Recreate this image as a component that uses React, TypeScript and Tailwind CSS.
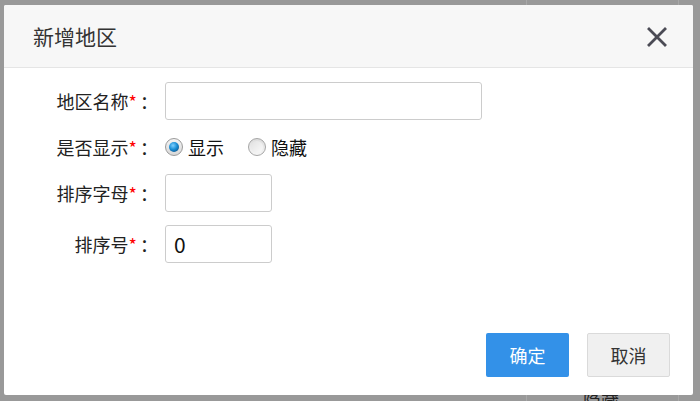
const font = "font-['Noto_Sans_CJK_SC','Noto_Sans',sans-serif]";

function Label({ text }: { text: string }) {
    return (
        <div className="w-[154px] shrink-0 text-right text-[18px] leading-none text-[#222]">
            {text}
            <span className="text-[#f00]">*</span>
            <span className="ml-[3px]">：</span>
        </div>
    );
}

function Radio({ checked, label }: { checked?: boolean; label: string }) {
    return (
        <label className="flex items-center gap-[5px]">
            <span
                className={
                    checked
                        ? "flex h-[18px] w-[18px] items-center justify-center rounded-full border border-[#9a9a9a] bg-gradient-to-b from-[#f4f4f4] to-[#d8d8d8]"
                        : "flex h-[18px] w-[18px] items-center justify-center rounded-full border border-[#a5a5a5] bg-gradient-to-b from-[#dcdcdc] to-[#f6f6f6]"
                }
            >
                {checked ? (
                    <span className="h-[10px] w-[10px] rounded-full bg-[radial-gradient(circle_at_40%_35%,#7fd0ff_0%,#1a8fd6_45%,#0a3f6e_100%)]" />
                ) : (
                    <span className="h-[12px] w-[12px] rounded-full bg-gradient-to-br from-[#e2e2e2] to-[#fafafa]" />
                )}
            </span>
            <span className="text-[18px] leading-none text-[#111]">{label}</span>
        </label>
    );
}

export default function App() {
    return (
        <div className={`relative h-[401px] w-[700px] overflow-hidden bg-[#999] ${font}`}>
            {/* page behind the overlay */}
            <div className="absolute left-[526px] top-0 h-full w-px bg-[#a8a8a8]" />
            <div className="absolute left-[678px] top-0 h-full w-px bg-[#a8a8a8]" />
            <div className="absolute left-[583px] top-[392px] text-[18px] leading-none text-[#222]">隐藏</div>

            <div className="absolute left-[4px] top-[5px] flex h-[390px] w-[689px] flex-col overflow-hidden rounded-[2px] bg-white">
                <div className="flex h-[63px] shrink-0 items-center justify-between border-b border-[#e5e5e5] bg-[#f7f7f7] pl-[29px] pr-[26px]">
                    <h3 className="text-[21px] font-normal leading-none text-[#333]">新增地区</h3>
                    <svg width="20" height="20" viewBox="0 0 20 20" className="mt-[1px]">
                        <path d="M2 2L18 18M18 2L2 18" stroke="#4b4b55" strokeWidth="2.8" strokeLinecap="square" />
                    </svg>
                </div>

                <div className="flex flex-1 flex-col pt-[14px]">
                    <div className="flex items-center">
                        <Label text="地区名称" />
                        <input className="ml-[7px] h-[38px] w-[317px] rounded-[3px] border border-[#ccc] px-[8px] text-[18px] outline-none" />
                    </div>
                    <div className="flex h-[54px] items-center">
                        <Label text="是否显示" />
                        <div className="ml-[7px] flex items-center gap-[24px]">
                            <Radio checked label="显示" />
                            <Radio label="隐藏" />
                        </div>
                    </div>
                    <div className="flex items-center">
                        <Label text="排序字母" />
                        <input className="ml-[7px] h-[38px] w-[107px] rounded-[3px] border border-[#ccc] px-[8px] text-[18px] outline-none" />
                    </div>
                    <div className="mt-[13px] flex items-center">
                        <Label text="排序号" />
                        <input
                            defaultValue="0"
                            className="ml-[7px] h-[38px] w-[107px] rounded-[3px] border border-[#ccc] px-[8px] text-[21px] text-[#111] outline-none"
                        />
                    </div>
                </div>

                <div className="flex shrink-0 justify-end gap-[18px] pb-[18px] pr-[23px]">
                    <button className="h-[44px] w-[83px] rounded-[2px] bg-[#3391e8] text-[18px] text-white">确定</button>
                    <button className="h-[44px] w-[83px] rounded-[2px] border border-[#dadada] bg-[#f0f0f0] text-[18px] text-[#333]">
                        取消
                    </button>
                </div>
            </div>
        </div>
    );
}
